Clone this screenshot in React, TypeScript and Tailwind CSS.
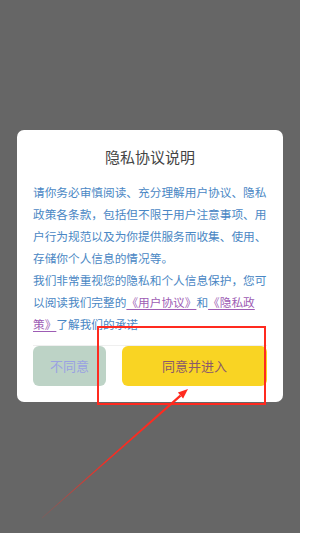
export default function App() {
  return (
    <div
      className="relative w-[300px] h-[533px] overflow-hidden bg-[#666666] pt-[130px] px-[17px]"
      style={{ fontFamily: '"Noto Sans CJK SC", "Noto Sans", sans-serif' }}
    >
      {/* dialog */}
      <div className="bg-white rounded-[7px] px-4 pt-4 pb-4">
        <h2 className="text-center text-[15px] leading-[22px] text-[#444444]">隐私协议说明</h2>

        <div className="mt-[13px] text-[11.68px] leading-[22px] text-[#4a87c4]">
          <p>请你务必审慎阅读、充分理解用户协议、隐私政策各条款，包括但不限于用户注意事项、用户行为规范以及为你提供服务而收集、使用、存储你个人信息的情况等。</p>
          <p>
            我们非常重视您的隐私和个人信息保护，您可以阅读我们完整的
            <span className="text-[#9d5cb4] underline underline-offset-2">《用户协议》</span>
            和
            <span className="text-[#9d5cb4] underline underline-offset-2">《隐私政策》</span>
            了解我们的承诺
          </p>
        </div>

        <div className="mt-[10px] h-px bg-[#efefef]" />
        <div className="flex gap-4">
          <button className="w-[73px] h-10 rounded-[6px] bg-[#bdd3c6] text-[13px] text-[#9aa2e2]">不同意</button>
          <button className="flex-1 h-10 rounded-[6px] bg-[#f9d423] text-[13px] text-[#8b5a6b]">同意并进入</button>
        </div>
      </div>

      {/* annotation */}
      <div className="absolute left-[97px] top-[326px] w-[169px] h-[79px] border-2 border-[#ff2a1f]" />
      <svg className="absolute left-0 top-0" width="300" height="533" viewBox="0 0 300 533">
        <defs>
          <linearGradient id="fade" x1="42" y1="518" x2="188" y2="389" gradientUnits="userSpaceOnUse">
            <stop offset="0" stopColor="#ff2a1f" stopOpacity="0.2" />
            <stop offset="0.45" stopColor="#ff2a1f" stopOpacity="1" />
          </linearGradient>
        </defs>
        <polygon points="42.1,518.2 41.9,517.8 179.7,394.7 181.3,396.5" fill="url(#fade)" />
        <polygon points="188,389 183.1,398.6 177.9,392.6" fill="#ff2a1f" />
      </svg>
    </div>
  );
}
